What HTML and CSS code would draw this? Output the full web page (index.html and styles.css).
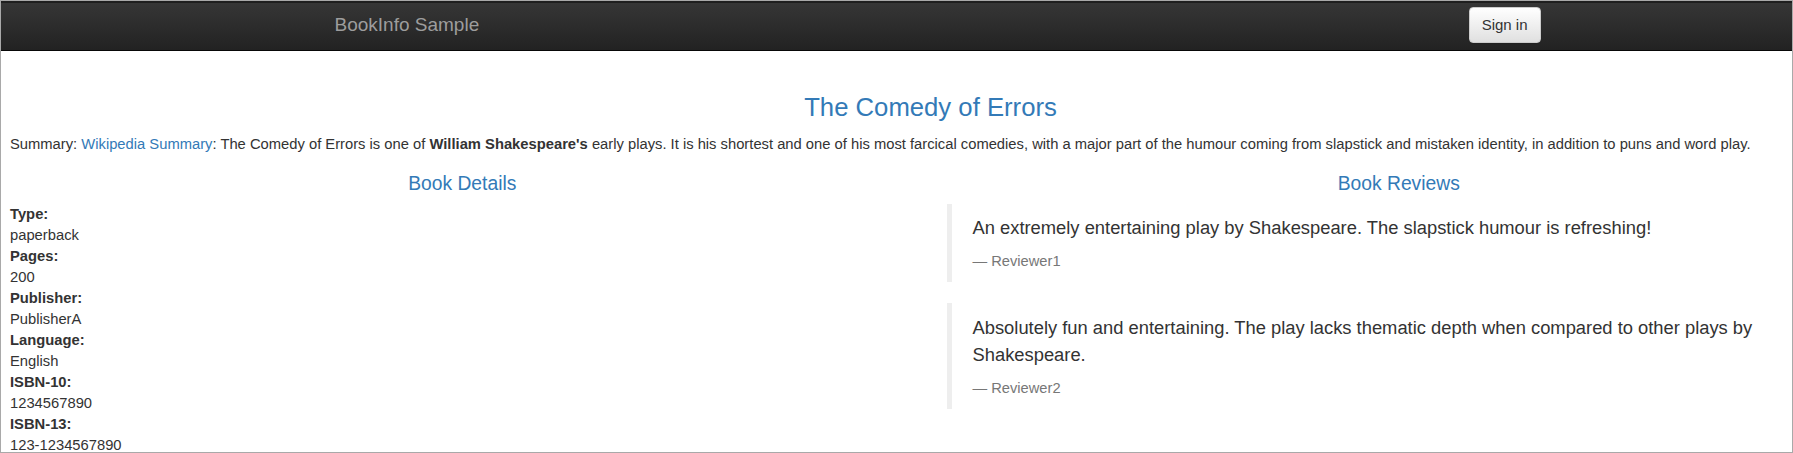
FILE: index.html
```html
<!DOCTYPE html>
<html lang="en">
<head>
<meta charset="utf-8">
<title>Simple Bookstore App</title>
<link rel="stylesheet" href="styles.css">
</head>
<body>
<div class="frame">
  <div class="page">
    <nav class="navbar">
      <div class="nav-container">
        <a class="brand" href="#">BookInfo Sample</a>
        <button class="btn" type="button">Sign in</button>
      </div>
    </nav>
    <main class="content">
      <section class="intro">
        <h3 class="title">The Comedy of Errors</h3>
        <p class="summary">Summary: <a href="#">Wikipedia Summary</a>: The Comedy of Errors is one of <b>William Shakespeare's</b> early plays. It is his shortest and one of his most farcical comedies, with a major part of the humour coming from slapstick and mistaken identity, in addition to puns and word play.</p>
      </section>
      <div class="row">
        <section class="col">
          <h4 class="col-title">Book Details</h4>
          <dl class="details">
            <dt>Type:</dt><dd>paperback</dd>
            <dt>Pages:</dt><dd>200</dd>
            <dt>Publisher:</dt><dd>PublisherA</dd>
            <dt>Language:</dt><dd>English</dd>
            <dt>ISBN-10:</dt><dd>1234567890</dd>
            <dt>ISBN-13:</dt><dd>123-1234567890</dd>
          </dl>
        </section>
        <section class="col">
          <h4 class="col-title">Book Reviews</h4>
          <blockquote class="review">
            <p>An extremely entertaining play by Shakespeare. The slapstick humour is refreshing!</p>
            <footer>Reviewer1</footer>
          </blockquote>
          <blockquote class="review">
            <p>Absolutely fun and entertaining. The play lacks thematic depth when compared to other plays by Shakespeare.</p>
            <footer>Reviewer2</footer>
          </blockquote>
        </section>
      </div>
    </main>
  </div>
</div>
</body>
</html>
```

FILE: styles.css
```css
* {
  box-sizing: border-box;
}

html, body {
  margin: 0;
  padding: 0;
  background: #ffffff;
}

body {
  font-family: "Liberation Sans", Arial, Helvetica, sans-serif;
  font-size: 14.75px;
  line-height: 1.4;
  color: #333333;
}

.frame {
  width: 1793px;
  height: 453px;
  border: 1px solid #a9a9a9;
  overflow: hidden;
  background: #ffffff;
}

.page {
  width: 1873px;
  margin-left: -7px;
}

/* Navbar */
.navbar {
  height: 50px;
  border-top: 2px solid #1f1f1f;
  border-bottom: 1px solid #080808;
  background: linear-gradient(to bottom, #363636 0%, #222222 100%);
  margin-bottom: 21px;
}

.nav-container {
  width: 1252px;
  height: 100%;
  margin: 0 auto;
  padding: 0 16px 4px 30px;
  display: flex;
  align-items: center;
  justify-content: space-between;
}

.brand {
  color: #9d9d9d;
  font-size: 19px;
  line-height: 21px;
  text-decoration: none;
}

.btn {
  font-family: inherit;
  font-size: 15px;
  line-height: 21px;
  height: 36px;
  padding: 6px 12px;
  color: #333333;
  border: 1px solid #cccccc;
  border-radius: 4px;
  background: linear-gradient(to bottom, #ffffff 0%, #e0e0e0 100%);
  box-shadow: inset 0 1px 0 rgba(255, 255, 255, 0.15), 0 1px 1px rgba(0, 0, 0, 0.075);
}

/* Content */
.content {
  display: flow-root;
  padding: 0 16px;
}

.title {
  margin: 21px 0 12.5px;
  font-size: 25.7px;
  line-height: 1.1;
  font-weight: 500;
  color: #337ab7;
  text-align: center;
}

.summary {
  margin: 0 0 9px;
}

.summary a {
  color: #337ab7;
  text-decoration: none;
}

.row {
  display: grid;
  grid-template-columns: 1fr 1fr;
  margin: 0 -16px;
}

.col {
  padding: 0 16px;
}

.col-title {
  margin: 10px 0 9px;
  font-size: 19.3px;
  line-height: 1.1;
  font-weight: 500;
  color: #337ab7;
  text-align: center;
}

.details {
  margin: 0 0 20px;
  line-height: 21px;
}

.details dt {
  font-weight: 700;
}

.details dd {
  margin: 0;
}

.review {
  margin: 0 0 21px;
  padding: 10.5px 40px 10px 21px;
  border-left: 5px solid #eeeeee;
  font-size: 18.35px;
}

.review p {
  margin: 0 0 10px;
  line-height: 27px;
}

.review footer {
  display: block;
  font-size: 80%;
  line-height: 21px;
  color: #777777;
}

.review footer::before {
  content: "\2014 \00A0";
}
```
